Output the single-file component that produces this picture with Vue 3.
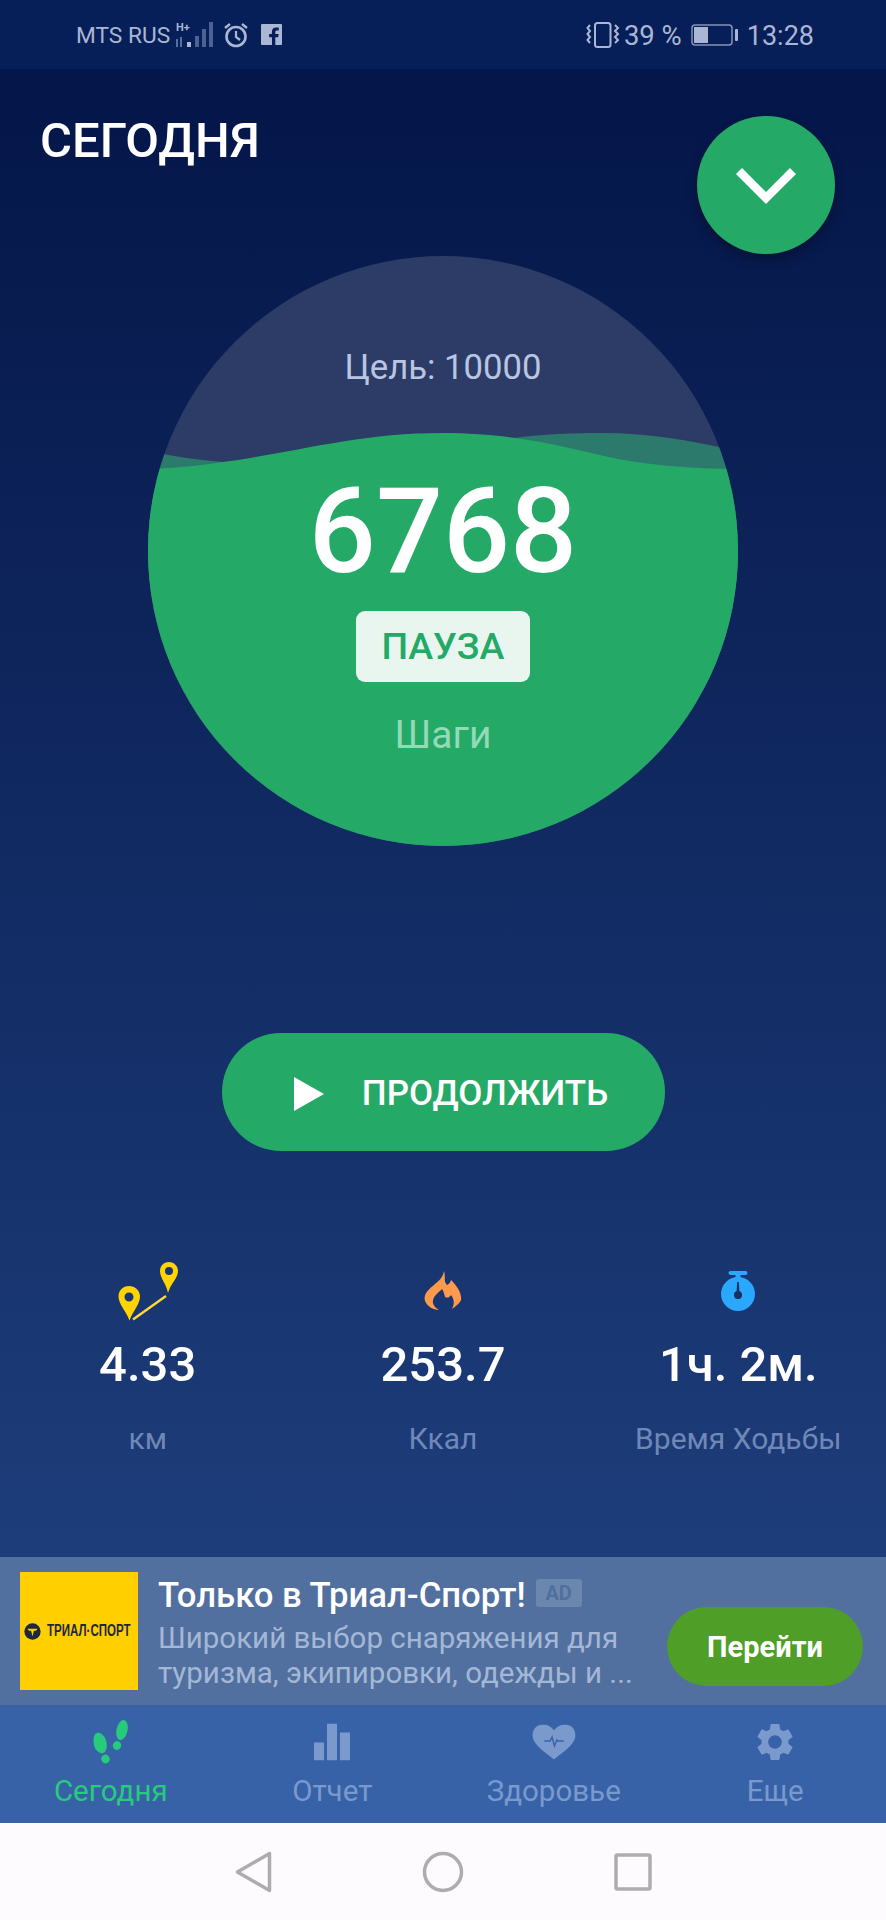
<script setup>
const metrics = [
  { id: 'dist', value: '4.33', label: 'км' },
  { id: 'fire', value: '253.7', label: 'Ккал' },
  { id: 'time', value: '1ч. 2м.', label: 'Время Ходьбы' }
]

const tabs = [
  { id: 'steps', label: 'Сегодня', active: true },
  { id: 'report', label: 'Отчет' },
  { id: 'health', label: 'Здоровье' },
  { id: 'more', label: 'Еще' }
]
</script>

<template>
  <div class="screen">
    <div class="status">
      <div class="status-side">
        <span class="carrier">MTS RUS</span>
        <svg class="signal" width="42" height="28" viewBox="0 0 42 28">
          <text x="1" y="10" class="hplus">H+</text>
          <rect x="1" y="18" width="2" height="8" fill="#5a6f9e" />
          <rect x="5" y="16" width="2" height="10" fill="#5a6f9e" />
          <rect x="12" y="21" width="4" height="5" fill="#aab6d3" />
          <rect x="20" y="15" width="4" height="11" fill="#4c6294" />
          <rect x="27" y="8" width="4" height="18" fill="#4c6294" />
          <rect x="34" y="1" width="4" height="25" fill="#4c6294" />
        </svg>
        <svg class="alarm" width="26" height="26" viewBox="0 0 26 26" fill="none" stroke="#aab6d3">
          <circle cx="13" cy="14.5" r="9.5" stroke-width="2.6" />
          <path d="M13 9v6l4 3" stroke-width="2.2" />
          <path d="M2 6l5-4M24 6l-5-4" stroke-width="2.4" />
        </svg>
        <svg class="fb" width="21" height="21" viewBox="0 0 22 22">
          <rect width="22" height="22" rx="1" fill="#aab6d3" />
          <path d="M15 22v-8h3l.5-3.4H15V8.500c0-1 .4-1.700 1.800-1.700h1.800V3.800c-.4 0-1.500-.1-2.700-.1-2.700 0-4.500 1.600-4.500 4.500v2.400H8.500V14h3v8z" fill="#071f58" />
        </svg>
      </div>
      <div class="status-side">
        <svg class="vibrate" width="34" height="26" viewBox="0 0 34 26" fill="none" stroke="#aab6d3" stroke-width="2">
          <rect x="9" y="1" width="15.500" height="24" rx="2.500" />
          <path d="M4 3L1.500 6 4 9 1.500 12 4 15 1.500 18 4 21M29 3l3 3-3 3 3 3-3 3 3 3-3 3" />
        </svg>
        <span class="pct">39 %</span>
        <svg class="battery" width="48" height="22" viewBox="0 0 48 22">
          <rect x="1" y="1" width="40" height="20" rx="3" fill="none" stroke="#8793b4" stroke-width="1.500" />
          <rect x="3" y="3" width="14" height="16" fill="#aab6d3" />
          <rect x="44" y="5" width="3" height="12" rx="1" fill="#aab6d3" />
        </svg>
        <span class="clock">13:28</span>
      </div>
    </div>

    <main class="today">
      <header class="head">
        <h1>СЕГОДНЯ</h1>
        <button class="fab">
          <svg width="62" height="40" viewBox="0 0 62 40" fill="none" stroke="#fff" stroke-width="8.500">
            <path d="M4 6l27 27L58 6" />
          </svg>
        </button>
      </header>

      <section class="gauge">
        <svg class="waves" viewBox="0 0 590 590">
          <path d="M0 195C25 200 50 204 75 206L360 190L365 182C395 178 425 177 454 177C500 177 540 184 590 195V590H0Z" fill="#2b7a6b" />
          <path d="M0 213C30 212 55 209 75 206C150 196 210 177 295 177C370 177 420 192 470 203C510 210 550 213 590 213V590H0Z" fill="#24a967" />
        </svg>
        <div class="goal">Цель: 10000</div>
        <div class="steps">6768</div>
        <div class="pause">ПАУЗА</div>
        <div class="steps-label">Шаги</div>
      </section>

      <button class="resume">
        <svg width="30" height="34" viewBox="0 0 30 34"><path d="M0 0l30 17L0 34z" fill="#fff" /></svg>
        <span>ПРОДОЛЖИТЬ</span>
      </button>

      <section class="metrics">
        <div v-for="m in metrics" :key="m.id" class="metric">
          <div class="metric-icon">
            <svg v-if="m.id === 'dist'" width="60" height="60" viewBox="0 0 60 60">
              <path fill-rule="evenodd" d="M11 25C5 25 .5 29.500.5 35.500C.5 43 8 50 11.500 59.500C15 50 22 43 22 35.500C22 29.500 17 25 11 25ZM11 31.500a4.500 4.500 0 1 1 0 9a4.500 4.500 0 0 1 0-9Z" fill="#ffd400" />
              <path fill-rule="evenodd" d="M51 1C45.500 1 42 5 42 10C42 17 48 22 50 32C53 22 60 17 60 10C60 5 56 1 51 1ZM51 6a4 4 0 1 1 0 8a4 4 0 0 1 0-8Z" fill="#ffd400" />
              <path d="M15 58.500L48 35" stroke="#ffd83a" stroke-width="2.400" />
            </svg>
            <svg v-else-if="m.id === 'fire'" width="38" height="40" viewBox="0 0 38 40">
              <path fill-rule="evenodd" d="M20 0C22 6 19 10 23 14C25 13 26 12 27 9C33 15 38 22 37 29C36 32 32 35 28 38C31 32 30 28 27 24C25 27 23 27 21 26C20 22 20 21 18 18C14 22 8 26 9 32C9.500 35 12 37 15 39C9 39 3 35 1 30C-1 23 5 18 11 13C15 10 19 6 20 0Z" fill="#ff9a4d" />
            </svg>
            <svg v-else width="36" height="40" viewBox="0 0 36 40">
              <rect x="8.500" y="0" width="19" height="4" rx="2" fill="#2aa7ff" />
              <rect x="15.500" y="3" width="5" height="5" fill="#2aa7ff" />
              <circle cx="18" cy="23" r="17" fill="#2aa7ff" />
              <path d="M17.200 11h1.600l.7 11h-3z" fill="#14315f" />
              <circle cx="18" cy="24" r="4" fill="#14315f" />
            </svg>
          </div>
          <div class="metric-value">{{ m.value }}</div>
          <div class="metric-label">{{ m.label }}</div>
        </div>
      </section>
    </main>

    <aside class="ad">
      <div class="ad-logo">
        <svg width="17" height="17" viewBox="0 0 24 24">
          <circle cx="12" cy="12" r="11.500" fill="#1e2740" />
          <path d="M5 8h14l-2 3h-3l-2 8-2-8H7z" fill="#ffcf00" />
        </svg>
        <span>ТРИАЛ·СПОРТ</span>
      </div>
      <div class="ad-text">
        <div class="ad-title">Только в Триал-Спорт!<span class="ad-tag">AD</span></div>
        <div class="ad-line">Широкий выбор снаряжения для</div>
        <div class="ad-line">туризма, экипировки, одежды и ...</div>
      </div>
      <button class="ad-go">Перейти</button>
    </aside>

    <nav class="tabs">
      <div v-for="t in tabs" :key="t.id" class="tab" :class="{ active: t.active }">
        <svg v-if="t.id === 'steps'" class="tab-icon" width="35" height="44" viewBox="0 0 35 44" fill="#27cb7c">
          <ellipse cx="6.500" cy="23" rx="6.500" ry="10.500" transform="rotate(-15 6.500 23)" />
          <ellipse cx="12" cy="39" rx="4.200" ry="4.500" transform="rotate(-15 12 39)" />
          <ellipse cx="28.500" cy="10" rx="5.500" ry="10.200" transform="rotate(12 28.500 10)" />
          <ellipse cx="23.500" cy="25.500" rx="4.200" ry="4.500" transform="rotate(15 23.500 25.500)" />
        </svg>
        <svg v-else-if="t.id === 'report'" class="tab-icon" width="36" height="37" viewBox="0 0 36 37" fill="#7a99cc">
          <rect x="0" y="19" width="10" height="18" />
          <rect x="13" y="0" width="10" height="37" />
          <rect x="26" y="9" width="10" height="28" />
        </svg>
        <svg v-else-if="t.id === 'health'" class="tab-icon" width="44" height="35" viewBox="0 0 44 36">
          <path d="M22 36C14 29 0 21 0 11C0 4 5 0 11 0C15 0 19 2 22 6C25 2 29 0 33 0C39 0 44 4 44 11C44 21 30 29 22 36Z" fill="#7a99cc" />
          <path d="M12 17h6l2-4 2.500 9 2.500-6 1 1h6" fill="none" stroke="#3862a8" stroke-width="1.500" />
        </svg>
        <svg v-else class="tab-icon" width="45" height="45" viewBox="0 0 24 24" fill="#7a99cc">
          <path d="M19.140 12.940c.04-.3.060-.61.060-.94 0-.32-.020-.64-.070-.94l2.030-1.580c.18-.14.230-.41.120-.61l-1.920-3.320c-.12-.22-.37-.29-.59-.22l-2.390.96c-.5-.38-1.030-.7-1.620-.94l-.36-2.540c-.040-.24-.24-.41-.48-.41h-3.840c-.24 0-.43.170-.47.410l-.36 2.540c-.59.240-1.130.570-1.620.940l-2.390-.96c-.22-.080-.47 0-.59.220L2.740 8.870c-.12.210-.080.470.120.610l2.030 1.580c-.05.300-.09.630-.09.940s.020.640.070.940l-2.030 1.580c-.18.140-.23.410-.12.610l1.920 3.320c.12.220.37.290.59.220l2.390-.96c.5.380 1.030.7 1.620.94l.36 2.540c.05.240.24.410.48.410h3.840c.24 0 .44-.170.47-.410l.36-2.540c.59-.240 1.130-.560 1.620-.940l2.390.96c.22.080.47 0 .59-.220l1.920-3.320c.12-.220.070-.470-.12-.610l-2.010-1.580zM12 15.600c-1.980 0-3.600-1.620-3.600-3.600s1.620-3.600 3.600-3.600 3.600 1.620 3.600 3.600-1.620 3.600-3.600 3.600z" />
        </svg>
        <span>{{ t.label }}</span>
      </div>
    </nav>

    <footer class="sysnav">
      <svg width="37" height="42" viewBox="0 0 37 42" fill="none" stroke="#adadb0" stroke-width="3.500" stroke-linejoin="round">
        <path d="M34.500 2.500v37L2.500 21z" />
      </svg>
      <svg width="42" height="42" viewBox="0 0 42 42" fill="none" stroke="#adadb0" stroke-width="3.500">
        <circle cx="21" cy="21" r="18.500" />
      </svg>
      <svg width="38" height="38" viewBox="0 0 38 38" fill="none" stroke="#adadb0" stroke-width="3.500" stroke-linejoin="round">
        <rect x="2" y="2" width="34" height="34" rx="1.500" />
      </svg>
    </footer>
  </div>
</template>

<style scoped>
.screen {
  width: 886px;
  height: 1920px;
  display: flex;
  flex-direction: column;
  overflow: hidden;
  font-family: Roboto, "Noto Sans", sans-serif;
  background: linear-gradient(180deg, #05174a 0, #05174a 120px, #1d3d7a 1557px);
}

.status {
  height: 69px;
  padding: 0 72px 0 76px;
  display: flex;
  justify-content: space-between;
  align-items: center;
  background: #071f58;
  color: #aab6d3;
}
.status-side { display: flex; align-items: center; }
.carrier { font-size: 22.700px; margin-top: 2px; }
.signal { margin-left: 5px; }
.hplus { font-size: 11px; font-weight: 700; fill: #aab6d3; }
.alarm { margin-left: 6px; }
.fb { margin-left: 12px; }
.pct { font-size: 27.500px; margin: 2px 0 0 4px; }
.battery { margin-left: 9px; }
.clock { font-size: 27px; margin: 2px 0 0 8px; }

.today { height: 1488px; display: flex; flex-direction: column; align-items: center; }

.head {
  width: 100%;
  height: 187px;
  padding: 47px 51px 0 40px;
  display: flex;
  justify-content: space-between;
  align-items: flex-start;
  box-sizing: border-box;
}
h1 {
  margin: 2px 0 0;
  color: #fff;
  font-size: 49px;
  line-height: 46px;
  font-weight: 500;
}
.fab {
  width: 138px;
  height: 138px;
  border: 0;
  padding: 0;
  border-radius: 50%;
  background: #24a967;
  box-shadow: 0 6px 12px rgba(0, 0, 0, 0.3);
  display: flex;
  align-items: center;
  justify-content: center;
}

.gauge {
  position: relative;
  width: 590px;
  height: 590px;
  flex: none;
  border-radius: 50%;
  overflow: hidden;
  background: #2c3c66;
  display: flex;
  flex-direction: column;
  align-items: center;
}
.waves { position: absolute; inset: 0; }
.gauge > div { position: relative; }
.goal { margin-top: 91px; height: 40px; line-height: 40px; font-size: 34.700px; color: #b9c5e2; }
.steps { margin-top: 75px; height: 140px; line-height: 140px; font-size: 118px; font-weight: 500; color: #fff; }
.pause {
  margin-top: 9px;
  width: 174px;
  height: 71px;
  line-height: 71px;
  text-align: center;
  background: #e9f6f0;
  border-radius: 9px;
  color: #24a967;
  font-size: 37.500px;
  font-weight: 500;
}
.steps-label { margin-top: 31px; height: 44px; line-height: 44px; font-size: 39px; color: #93dab7; }

.resume {
  margin-top: 187px;
  width: 443px;
  height: 118px;
  flex: none;
  border: 0;
  border-radius: 59px;
  padding: 3px 0 0 16px;
  background: #24a967;
  color: #fff;
  font-family: inherit;
  font-size: 35px;
  font-weight: 500;
  display: flex;
  align-items: center;
  justify-content: center;
  gap: 38px;
}

.metrics { width: 100%; margin-top: 109px; display: grid; grid-template-columns: repeat(3, 1fr); }
.metric { display: flex; flex-direction: column; align-items: center; }
.metric-icon { height: 62px; display: flex; align-items: center; justify-content: center; }
.metric-value { margin-top: 16px; height: 54px; line-height: 54px; font-size: 49px; font-weight: 500; color: #fff; }
.metric-label { margin-top: 29px; height: 36px; line-height: 36px; font-size: 30px; color: #6f88b5; }

.ad {
  height: 148px;
  flex: none;
  display: flex;
  align-items: flex-start;
  background: #51709f;
}
.ad-logo {
  margin: 15px 0 0 20px;
  padding-left: 4px;
  box-sizing: border-box;
  width: 118px;
  height: 118px;
  flex: none;
  background: #ffcf00;
  display: flex;
  align-items: center;
  gap: 6px;
  color: #1e2740;
  font-family: "Liberation Sans", sans-serif;
  font-size: 16px;
  font-weight: 700;
  white-space: nowrap;
}
.ad-logo svg { flex: none; }
.ad-logo span { width: 83px; transform: scaleX(0.72); transform-origin: left center; }
.ad-text { margin-left: 20px; flex: 1; min-width: 0; }
.ad-title {
  margin: 16px 0 4px;
  height: 44px;
  line-height: 44px;
  color: #fff;
  font-size: 34.700px;
  font-weight: 500;
  display: flex;
  align-items: center;
}
.ad-tag {
  margin: -4px 0 0 10px;
  width: 46px;
  height: 28px;
  line-height: 28px;
  border-radius: 3px;
  text-align: center;
  background: #6b87ad;
  color: #4f6f9e;
  font-size: 20px;
  font-weight: 700;
}
.ad-line { height: 35px; line-height: 35px; font-size: 29.500px; color: #a4b7d6; white-space: nowrap; }
.ad-go {
  margin: 50px 23px 0 0;
  width: 196px;
  height: 79px;
  flex: none;
  border: 0;
  border-radius: 40px;
  background: #4f9e28;
  color: #fff;
  font-family: inherit;
  font-size: 29px;
  font-weight: 700;
}

.tabs { height: 118px; flex: none; display: grid; grid-template-columns: repeat(4, 1fr); background: #3862a8; }
.tab {
  height: 118px;
  position: relative;
  display: flex;
  flex-direction: column;
  align-items: center;
  color: #7a99cc;
  font-size: 29.500px;
}
.tab.active { color: #27cb7c; }
.tab-icon { position: absolute; left: 50%; top: 36.500px; transform: translate(-50%, -50%); }
.tab span { margin-top: 66px; height: 40px; line-height: 40px; }

.sysnav {
  flex: 1;
  background: #fdfbfe;
  display: flex;
  align-items: center;
  justify-content: center;
  gap: 150px;
}
</style>

<style>
html, body { background: #05174a; }
</style>
